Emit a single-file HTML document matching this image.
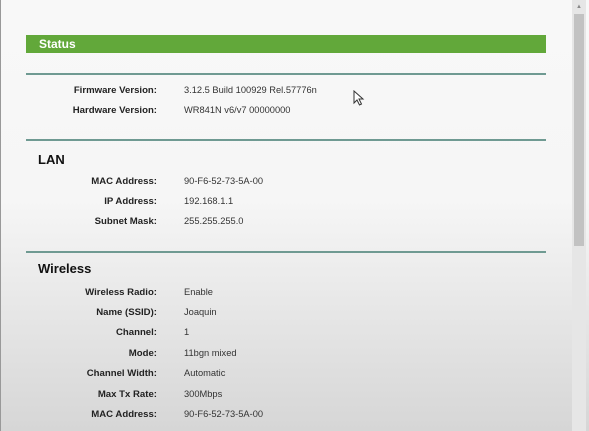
<!DOCTYPE html>
<html><head><style>
body{margin:0;width:589px;height:431px;overflow:hidden;font-family:"Liberation Sans",Arial,sans-serif;}
.page{position:absolute;left:0;top:0;width:589px;height:431px;background:linear-gradient(#f8f8f8 0,#f6f6f6 200px,#d6d6d6 431px);border-left:1px solid #999;box-sizing:border-box;}
.bar{position:absolute;left:25px;top:35px;width:520px;height:18px;background:#62a83a;color:#fff;font-weight:bold;font-size:12px;line-height:18px;padding-left:13px;box-sizing:border-box;}
.hr{position:absolute;left:25px;width:520px;height:2px;background:#6f9a92;}
.h{position:absolute;left:37px;font-weight:bold;font-size:13px;color:#111;}
.l{position:absolute;right:432px;font-weight:bold;font-size:9.6px;color:#222;white-space:nowrap;}
.v{position:absolute;left:183px;font-size:9.3px;color:#333;white-space:nowrap;}
.sb{position:absolute;left:571px;top:0;width:14px;height:431px;background:#e6e6e6;}
.th{position:absolute;left:573px;top:14px;width:10px;height:232px;background:#c2c2c2;}
</style></head><body><div class="page">
<div class="bar">Status</div>
<div class="hr" style="top:73px"></div>
<div class="l" style="top:85px">Firmware Version:</div><div class="v" style="top:85px">3.12.5 Build 100929 Rel.57776n</div>
<div class="l" style="top:105px">Hardware Version:</div><div class="v" style="top:105px">WR841N v6/v7 00000000</div>
<div class="hr" style="top:139px"></div>
<div class="h" style="top:152px">LAN</div>
<div class="l" style="top:176px">MAC Address:</div><div class="v" style="top:176px">90-F6-52-73-5A-00</div>
<div class="l" style="top:196px">IP Address:</div><div class="v" style="top:196px">192.168.1.1</div>
<div class="l" style="top:216px">Subnet Mask:</div><div class="v" style="top:216px">255.255.255.0</div>
<div class="hr" style="top:251px"></div>
<div class="h" style="top:261px">Wireless</div>
<div class="l" style="top:287px">Wireless Radio:</div><div class="v" style="top:287px">Enable</div>
<div class="l" style="top:307px">Name (SSID):</div><div class="v" style="top:307px">Joaquin</div>
<div class="l" style="top:327px">Channel:</div><div class="v" style="top:327px">1</div>
<div class="l" style="top:348px">Mode:</div><div class="v" style="top:348px">11bgn mixed</div>
<div class="l" style="top:368px">Channel Width:</div><div class="v" style="top:368px">Automatic</div>
<div class="l" style="top:389px">Max Tx Rate:</div><div class="v" style="top:389px">300Mbps</div>
<div class="l" style="top:409px">MAC Address:</div><div class="v" style="top:409px">90-F6-52-73-5A-00</div>
<svg style="position:absolute;left:352px;top:90px" width="12" height="16" viewBox="0 0 12 16"><path d="M1 1 L1 13 L4 10 L6.5 15 L8.5 14 L6 9 L10 9 Z" fill="#fff" stroke="#333" stroke-width="1"/></svg>
<div class="sb"></div><div class="th"></div>
<div style="position:absolute;left:575px;top:4px;font-size:6px;color:#888">▲</div>
</div></body></html>
